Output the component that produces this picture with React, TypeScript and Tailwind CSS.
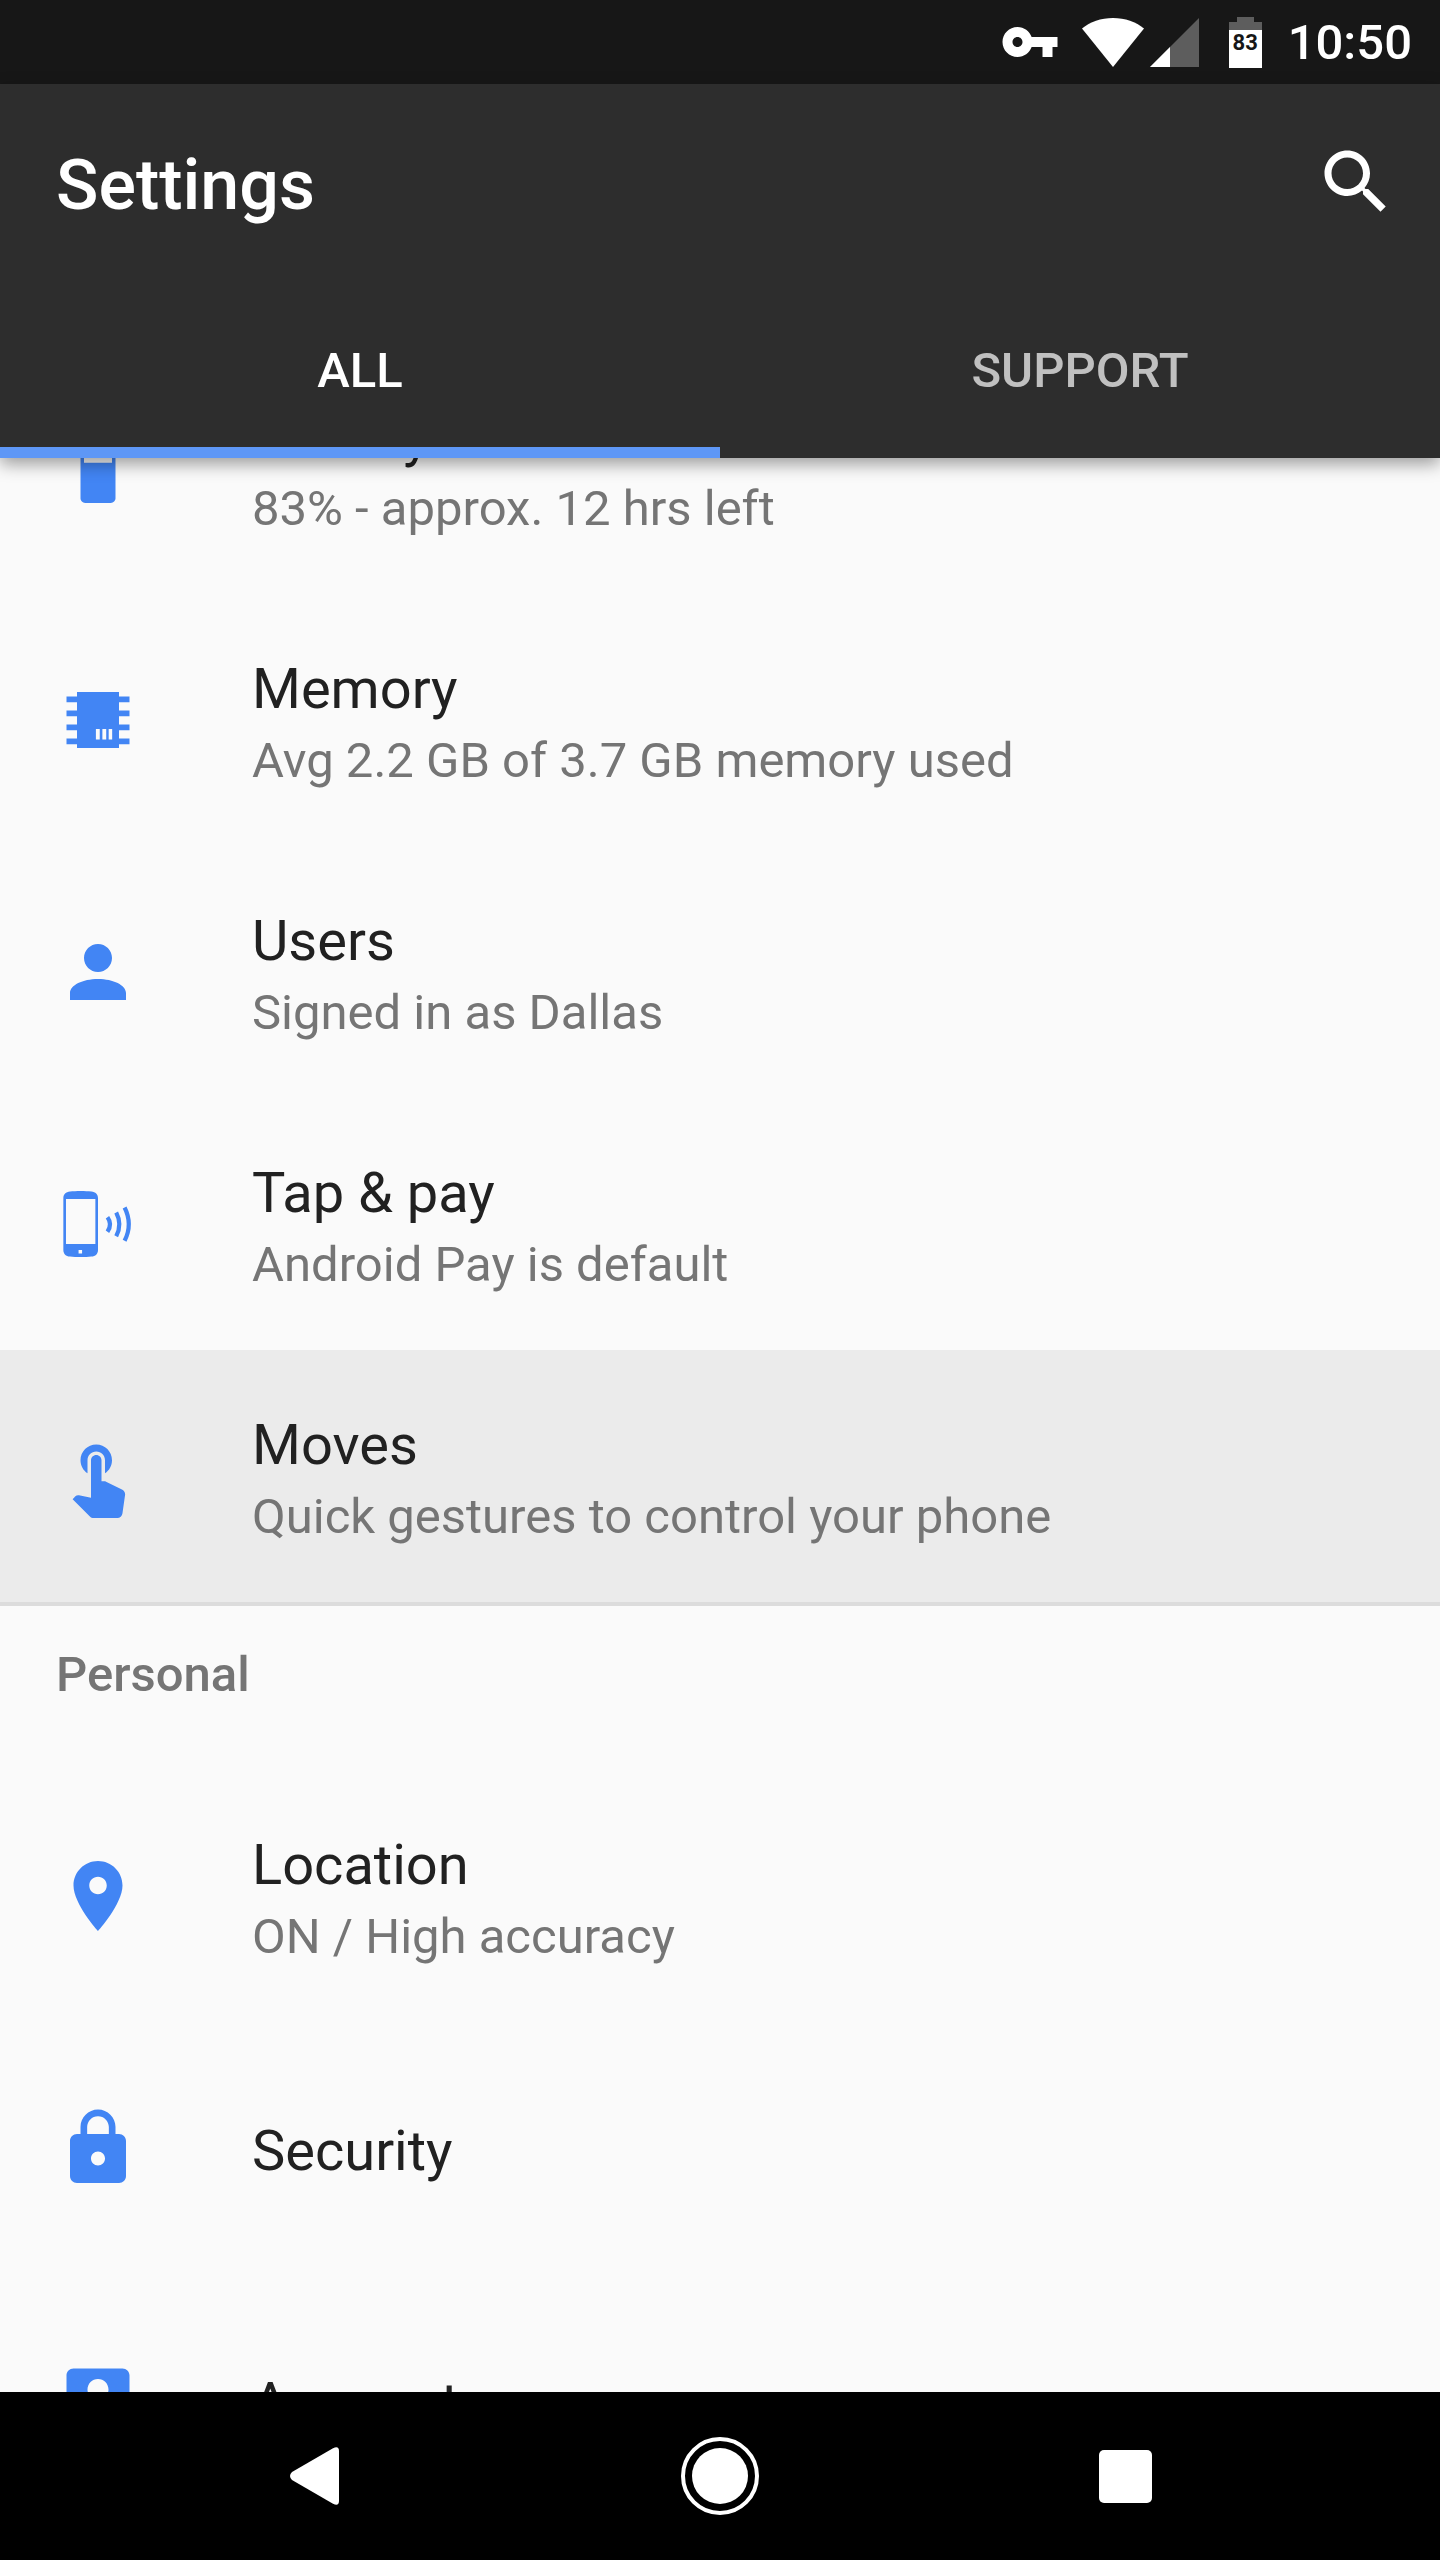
import { useState } from 'react';
import type { ReactNode } from 'react';
import { cx } from 'class-variance-authority';

type Setting = {
  title: string;
  summary?: string;
  icon: ReactNode;
};

const deviceSettings: Setting[] = [
  {
    title: 'Battery',
    summary: '83% - approx. 12 hrs left',
    icon: (
      <path
        fillRule="evenodd"
        d="M15.67 4H14V2h-4v2H8.33C7.6 4 7 4.6 7 5.33v15.34C7 21.4 7.6 22 8.33 22h7.34c.73 0 1.33-.6 1.33-1.33V5.33C17 4.6 16.4 4 15.67 4zM8 5.5h8v5H8z"
      />
    ),
  },
  {
    title: 'Memory',
    summary: 'Avg 2.2 GB of 3.7 GB memory used',
    icon: (
      <path
        fillRule="evenodd"
        d="M6 4h12v1.3h3v1.6h-3v2.4h3v1.6h-3v2.4h3v1.6h-3v2.4h3v1.6h-3V20H6v-1.1H3v-1.6h3v-2.4H3v-1.6h3v-2.4H3V9.3h3V6.9H3V5.3h3zM11.4 14.6v3h1.1v-3zM13.25 14.6v3h1.1v-3zM15.05 14.6v3h1v-3z"
      />
    ),
  },
  {
    title: 'Users',
    summary: 'Signed in as Dallas',
    icon: (
      <path d="M12 12c2.21 0 4-1.79 4-4s-1.79-4-4-4-4 1.79-4 4 1.79 4 4 4zm0 2c-4.42 0-8 1.79-8 4v2h16v-2c0-2.21-3.58-4-8-4z" />
    ),
  },
  {
    title: 'Tap & pay',
    summary: 'Android Pay is default',
    icon: (
      <>
        <path
          fillRule="evenodd"
          d="M4 2.7C5.7 2.5 8.4 2.5 10.1 2.7C11.3 2.85 12 3.5 12 4.6V19.4C12 20.5 11.3 21.2 10.1 21.3C8.4 21.5 5.7 21.5 4 21.3C2.8 21.2 2.1 20.5 2.1 19.4V4.6C2.1 3.5 2.8 2.85 4 2.7zM2.85 4.86V17.7H11.25V4.86zM6.45 19.4v1h1v-1z"
        />
        <path
          fill="none"
          stroke="currentColor"
          strokeWidth="1.2"
          d="M14.7 10.1Q16.2 12.1 14.7 14.2M17.2 8.7Q19 12.1 17.2 15.5M19.6 7.3Q22 12.1 19.6 16.8"
        />
      </>
    ),
  },
  {
    title: 'Moves',
    summary: 'Quick gestures to control your phone',
    icon: (
      <path d="M9 11.24V7.5C9 6.12 10.12 5 11.5 5S14 6.12 14 7.5v3.74c1.21-.81 2-2.18 2-3.74C16 5.01 13.99 3 11.5 3S7 5.01 7 7.5c0 1.56.79 2.93 2 3.74zm9.84 4.63l-4.54-2.26c-.17-.07-.35-.11-.54-.11H13v-6c0-.83-.67-1.5-1.5-1.5S10 6.67 10 7.5v10.74l-3.43-.72c-.08-.01-.15-.03-.24-.03-.31 0-.59.13-.79.33l-.79.8 4.94 4.94c.27.27.65.44 1.06.44h6.79c.75 0 1.33-.55 1.44-1.28l.75-5.27c.01-.07.02-.14.02-.2 0-.62-.38-1.16-.91-1.38z" />
    ),
  },
];

const personalSettings: Setting[] = [
  {
    title: 'Location',
    summary: 'ON / High accuracy',
    icon: (
      <path d="M12 2C8.13 2 5 5.13 5 9c0 5.25 7 13 7 13s7-7.75 7-13c0-3.87-3.13-7-7-7zm0 9.5c-1.38 0-2.5-1.12-2.5-2.5s1.12-2.5 2.5-2.5 2.5 1.12 2.5 2.5-1.12 2.5-2.5 2.5z" />
    ),
  },
  {
    title: 'Security',
    icon: (
      <path d="M18 8h-1V6c0-2.76-2.24-5-5-5S7 3.24 7 6v2H6c-1.1 0-2 .9-2 2v10c0 1.1.9 2 2 2h12c1.1 0 2-.9 2-2V10c0-1.1-.9-2-2-2zm-6 9c-1.1 0-2-.9-2-2s.9-2 2-2 2 .9 2 2-.9 2-2 2zm3.1-9H8.9V6c0-1.71 1.39-3.1 3.1-3.1 1.71 0 3.1 1.39 3.1 3.1v2z" />
    ),
  },
  {
    title: 'Accounts',
    icon: (
      <path d="M3 5v14c0 1.1.89 2 2 2h14c1.1 0 2-.9 2-2V5c0-1.1-.9-2-2-2H5c-1.11 0-2 .9-2 2zm12 4c0 1.66-1.34 3-3 3s-3-1.34-3-3 1.34-3 3-3 3 1.34 3 3zm-9 8c0-2 4-3.1 6-3.1s6 1.1 6 3.1v1H6v-1z" />
    ),
  },
];

function StatusBar() {
  return (
    <div className="flex h-[84px] shrink-0 items-center justify-end bg-[#171717] pr-7 text-white">
      <svg viewBox="0 0 24 24" className="mr-[22px] size-[60px]" fill="currentColor" aria-label="VPN">
        <path d="M12.65 10C11.83 7.67 9.61 6 7 6c-3.31 0-6 2.69-6 6s2.69 6 6 6c2.61 0 4.83-1.67 5.65-4H17v4h4v-4h2v-4H12.65zM7 14c-1.1 0-2-.9-2-2s.9-2 2-2 2 .9 2 2-.9 2-2 2z" />
      </svg>
      <svg viewBox="0 0 62 49" className="mr-1.5 h-[49px] w-[62px]" fill="currentColor" aria-label="Wi-Fi">
        <path d="M31 49L0 10.5C8 4 19 0 31 0s23 4 31 10.5z" />
      </svg>
      <svg viewBox="0 0 49 49" className="mr-[30px] size-[49px]" aria-label="Signal">
        <path fill="#5d5d5d" d="M49 0v49H0z" />
        <path fill="currentColor" d="M20 29v20H0z" />
      </svg>
      <div className="relative mr-[26px]">
        <svg viewBox="0 0 33 51" className="h-[51px] w-[33px]" aria-hidden="true">
          <path fill="#5d5d5d" d="M8 0h17v5h8v8H0V5h8z" />
          <path fill="currentColor" d="M0 13h33v38H0z" />
        </svg>
        <span className="absolute inset-x-0 top-3.5 text-center text-[22px] leading-6 font-bold text-[#171717]">
          83
        </span>
      </div>
      <span className="pt-0.5 text-[49px] leading-[58px] font-medium">10:50</span>
    </div>
  );
}

function SettingRow({ setting, pressed }: { setting: Setting; pressed?: boolean }) {
  return (
    <li>
      <button
        type="button"
        className={cx(
          'flex h-[252px] w-full items-center pl-14 text-left',
          pressed && 'bg-[#ebebeb]',
        )}
      >
        <svg
          viewBox="0 0 24 24"
          className="mr-28 size-[84px] shrink-0 text-[#4285f4]"
          fill="currentColor"
          aria-hidden="true"
        >
          {setting.icon}
        </svg>
        <span className="flex flex-col gap-2.5 pt-1.5">
          <span className="text-[56px] leading-[66px] text-[#212121]">{setting.title}</span>
          {setting.summary && (
            <span className="text-[49px] leading-[58px] text-[#757575]">{setting.summary}</span>
          )}
        </span>
      </button>
    </li>
  );
}

function NavigationBar() {
  return (
    <nav className="flex h-[168px] shrink-0 bg-black px-28 text-white">
      <button type="button" aria-label="Back" className="flex flex-1 items-center justify-center">
        <svg viewBox="0 0 50 58" className="h-[58px] w-[50px]" fill="currentColor">
          <path d="M2 25L43 1.2Q49 -1.5 49 4V54Q49 59.5 43 56.8L2 33Q-2 29 2 25z" />
        </svg>
      </button>
      <button type="button" aria-label="Home" className="flex flex-1 items-center justify-center">
        <svg viewBox="0 0 78 78" className="size-[78px]" fill="currentColor">
          <circle cx="39" cy="39" r="37" fill="none" stroke="currentColor" strokeWidth="4" />
          <circle cx="39" cy="39" r="28" />
        </svg>
      </button>
      <button type="button" aria-label="Recent apps" className="flex flex-1 items-center justify-center">
        <span className="size-[53px] rounded-[5px] bg-white" />
      </button>
    </nav>
  );
}

const tabs = ['ALL', 'SUPPORT'];

export default function App() {
  const [activeTab, setActiveTab] = useState('ALL');

  return (
    <div className="flex h-screen flex-col overflow-hidden bg-[#fafafa] font-['Roboto',sans-serif]">
      <StatusBar />

      <header className="z-10 shrink-0 bg-[#2d2d2d] text-white shadow-[0_6px_16px_rgba(0,0,0,0.38)]">
        <div className="flex h-[196px] items-center justify-between pr-[42px] pl-14">
          <h1 className="pt-1.5 text-[70px] leading-[82px] font-medium">Settings</h1>
          <button type="button" aria-label="Search">
            <svg viewBox="0 0 24 24" className="size-[84px]" fill="currentColor">
              <path d="M15.5 14h-.79l-.28-.27C15.41 12.59 16 11.11 16 9.5 16 5.91 13.09 3 9.5 3S3 5.91 3 9.5 5.91 16 9.5 16c1.61 0 3.09-.59 4.23-1.57l.27.28v.79l5 4.99L20.49 19l-4.99-5zm-6 0C7.01 14 5 11.99 5 9.5S7.01 5 9.5 5 14 7.01 14 9.5 11.99 14 9.5 14z" />
            </svg>
          </button>
        </div>
        <div role="tablist" className="flex h-[178px]">
          {tabs.map((tab) => (
            <button
              key={tab}
              type="button"
              role="tab"
              aria-selected={tab === activeTab}
              onClick={() => setActiveTab(tab)}
              className={cx(
                'flex-1 border-b-[11px] pt-3.5 text-[49px] leading-[58px] font-medium',
                tab === activeTab
                  ? 'border-[#5e97f6] text-white'
                  : 'border-transparent text-[#c0c0c0]',
              )}
            >
              {tab}
            </button>
          ))}
        </div>
      </header>

      <main className="min-h-0 flex-1 overflow-hidden">
        {/* List is scrolled part way through the first row */}
        <ul className="-mt-[116px] border-b-4 border-[#dcdcdc]">
          {deviceSettings.map((setting) => (
            <SettingRow key={setting.title} setting={setting} pressed={setting.title === 'Moves'} />
          ))}
        </ul>
        <h2 className="h-[164px] pt-10 pl-14 text-[49px] leading-[58px] font-medium text-[#757575]">
          Personal
        </h2>
        <ul>
          {personalSettings.map((setting) => (
            <SettingRow key={setting.title} setting={setting} />
          ))}
        </ul>
      </main>

      <NavigationBar />
    </div>
  );
}
